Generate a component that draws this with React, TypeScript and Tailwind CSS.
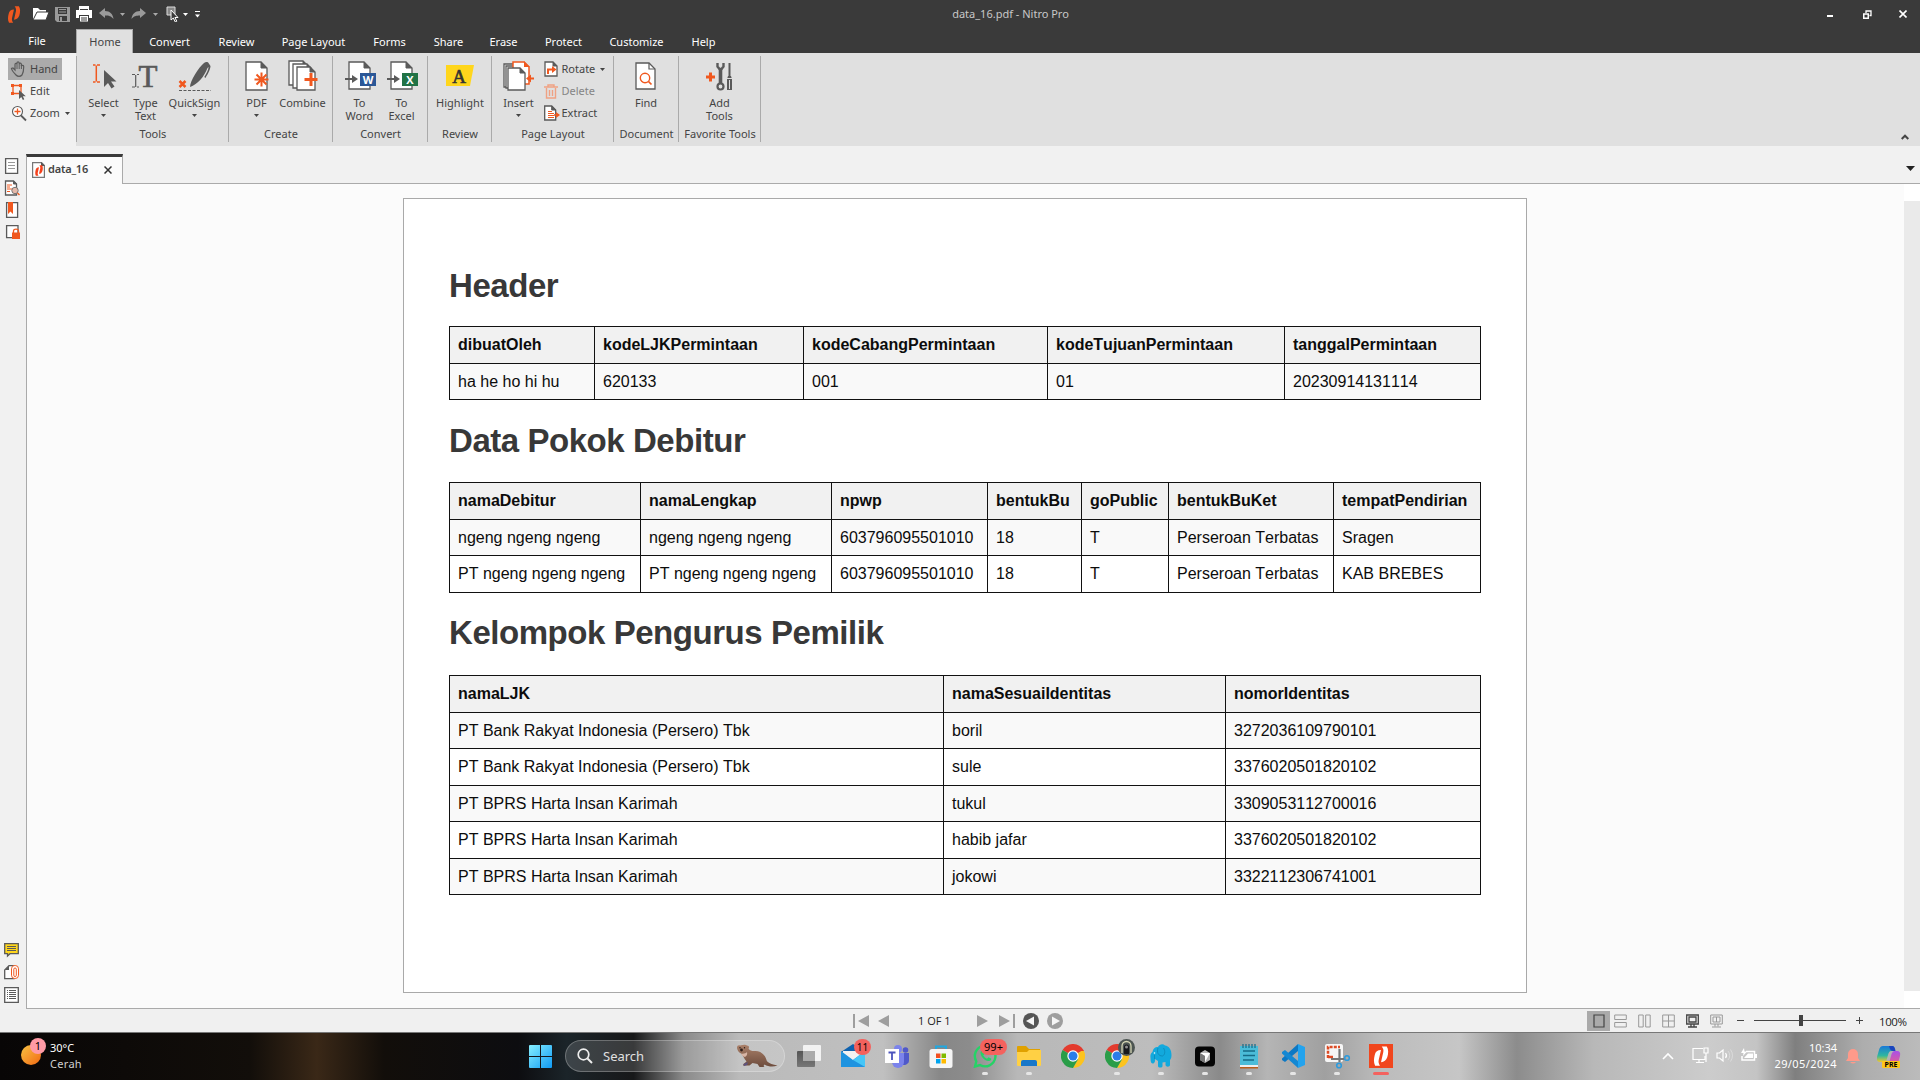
import React from "react";

const O = "#f0581f";
const G = "#5a5a5a";

function Svg({ w, h, className = "", children }: { w: number; h: number; className?: string; children: React.ReactNode }) {
  return (
    <svg width={w} height={h} viewBox={`0 0 ${w} ${h}`} fill="none" className={`block shrink-0 ${className}`}>
      {children}
    </svg>
  );
}

function Caret({ color = "#444" }: { color?: string }) {
  return (
    <Svg w={5} h={3}>
      <path d="M0 0h5L2.5 3z" fill={color} />
    </Svg>
  );
}

/* Two interlocking leaves of the Nitro mark */
function NitroMark({ w, h, color = O }: { w: number; h: number; color?: string }) {
  return (
    <svg width={w} height={h} viewBox="0 0 12 16" className="block shrink-0" fill={color}>
      <path d="M1 7.200C1.500 4.500 3.200 3.200 6 3.200L4.200 11c-.4 1.700-.1 3.200 1 4.700H1.300C-.1 13 .3 10 1 7.200z" />
      <path d="M6.600.3h4C12.100 2.500 12 6 11 9c-.9 2.600-2.500 3.700-5 3.900L7.800 5c.4-1.700 0-3.200-1.200-4.700z" />
    </svg>
  );
}

function TitleBar() {
  return (
    <div className="flex h-7 shrink-0 items-start text-[11px] text-[#c8c8c8]">
      <div className="flex h-7 w-[720px] items-center pl-[7px]">
        <NitroMark w={14} h={17} />
        <Svg w={18} h={16} className="ml-[11px]">
          <path d="M1 14V2h5l2 2h6v3" fill="#fff" />
          <path d="M1 14L5 6h12l-3 8z" fill="#fff" stroke="#3a3a3a" />
        </Svg>
        <Svg w={15} h={15} className="ml-[5px]">
          <path d="M0 0h15v15H2l-2-2z" fill="#9a9a9a" />
          <path d="M3 1h9v6H3zM4 9h8v5H4z" fill="#3a3a3a" />
          <path d="M4 2h7v1H4zM4 4.500h7v1H4zM5 10h2v4H5z" fill="#9a9a9a" />
        </Svg>
        <Svg w={16} h={16} className="ml-[6px]">
          <path d="M3 0h10v4H3zM0 4h16v8h-3V9H3v3H0z" fill="#fff" />
          <path d="M4 10h8v5.500H4z" fill="#fff" />
          <path d="M5 12h6M5 14h6M4 3.500h8" stroke="#3a3a3a" />
        </Svg>
        <Svg w={15} h={12} className="ml-[7px]">
          <path d="M6 0v3c5 0 8 3 8.500 8C12 8 10 7.500 6 7.500V10L0 5z" fill="#9a9a9a" />
        </Svg>
        <div className="ml-[6px]"><Caret color="#aaa" /></div>
        <Svg w={15} h={12} className="ml-[6px]">
          <path d="M9 0v3C4 3 1 6 .5 11 3 8 5 7.500 9 7.500V10l6-5z" fill="#9a9a9a" />
        </Svg>
        <div className="ml-[7px]"><Caret color="#aaa" /></div>
        <Svg w={14} h={16} className="ml-[8px]">
          <path d="M1 1h8v8H1z" fill="#888" stroke="#ddd" />
          <path d="M5 4v10l2.300-2 2 4 1.500-.8-1.900-3.700H12z" fill="#3a3a3a" stroke="#fff" />
        </Svg>
        <div className="ml-[3px]"><Caret color="#fff" /></div>
        <Svg w={5} h={7} className="ml-[7px]">
          <path d="M0 0h5v1H0zM0 3.500h5L2.500 6.500z" fill="#fff" />
        </Svg>
      </div>
      <div className="w-[581px] pt-[6px] text-center leading-[16px]">data_16.pdf - Nitro Pro</div>
      <div className="flex h-7 grow items-center justify-end pr-[13px]">
        <Svg w={6} h={2} className="mt-[4px]"><path d="M0 0h6v2H0z" fill="#fff" /></Svg>
        <Svg w={9} h={9} className="ml-[30px]">
          <path d="M.75 4h4.500v4.250H.75z" stroke="#fff" strokeWidth="1.500" />
          <path d="M3 3V1h5v4.500H6.500" stroke="#fff" strokeWidth="1.300" />
        </Svg>
        <Svg w={8} h={8} className="ml-[27px]"><path d="M.5.5l7 7M7.500.5l-7 7" stroke="#fff" strokeWidth="1.600" /></Svg>
      </div>
    </div>
  );
}

function Tab({ className, children }: { className: string; children: React.ReactNode }) {
  return <div className={`h-6 pl-[1px] pt-[5px] text-center leading-[16px] ${className}`}>{children}</div>;
}

function MenuTabs() {
  return (
    <div className="flex h-[25px] shrink-0 items-end text-[11px] text-white">
      <div className="h-6 w-[76px] pr-[2px] pt-[4px] text-center leading-[16px]">File</div>
      <div className="h-6 w-[57px] border border-b-0 border-[#aaa] bg-[#e0e0e0] pl-[1px] pt-[4px] text-center leading-[16px] text-[#444]">Home</div>
      <Tab className="w-[72px]">Convert</Tab>
      <Tab className="w-[62px]">Review</Tab>
      <Tab className="w-[92px]">Page Layout</Tab>
      <Tab className="w-[60px]">Forms</Tab>
      <Tab className="w-[58px]">Share</Tab>
      <Tab className="w-[52px]">Erase</Tab>
      <Tab className="w-[68px]">Protect</Tab>
      <Tab className="w-[78px]">Customize</Tab>
      <Tab className="w-[56px]">Help</Tab>
    </div>
  );
}

function Big({ icon, a, b, caret, className }: { icon: React.ReactNode; a: string; b?: string; caret?: boolean; className: string }) {
  return (
    <div className={`flex shrink-0 flex-col items-center leading-[13px] ${className}`}>
      <div className="flex h-[43px] items-start pt-[7px]">{icon}</div>
      <span className="whitespace-nowrap">{a}</span>
      {b && <span className="whitespace-nowrap">{b}</span>}
      {caret && <div className="mt-[5px]"><Caret /></div>}
    </div>
  );
}

function Group({ label, className, children }: { label: string; className: string; children: React.ReactNode }) {
  return (
    <div className={`mt-[3px] flex h-[86px] shrink-0 flex-col border-r border-[#aaa] ${className}`}>
      <div className="-mt-[3px] flex h-[73px] justify-center">{children}</div>
      <div className="whitespace-nowrap pl-[1px] text-center leading-[16px]">{label}</div>
    </div>
  );
}

function Small({ icon, label, caret, dim }: { icon: React.ReactNode; label: string; caret?: boolean; dim?: boolean }) {
  return (
    <div className={`flex h-[22px] items-center leading-[16px] ${dim ? "text-[#858585]" : ""}`}>
      <div className="w-[18px]">{icon}</div>
      <span>{label}</span>
      {caret && <div className="ml-[5px]"><Caret /></div>}
    </div>
  );
}

function PageShape({ x = 1, y = 1, w = 21, h = 28, c = 6 }: { x?: number; y?: number; w?: number; h?: number; c?: number }) {
  return (
    <>
      <path d={`M${x} ${y}h${w - c}l${c} ${c}v${h - c}h-${w}z`} fill="#fff" stroke={G} strokeWidth="1.300" />
      <path d={`M${x + w - c} ${y}l${c} ${c}h-${c}z`} fill={G} stroke={G} />
    </>
  );
}

function ConvertIcon({ color, letter }: { color: string; letter: string }) {
  return (
    <Svg w={31} h={32} className="ml-[1px]">
      <PageShape x={4} y={2} w={21} h={27} />
      <path d="M0 19h8" stroke={G} strokeWidth="2" />
      <path d="M7 15l6 4-6 4z" fill={G} />
      <path d="M15 13h16v13H15z" fill={color} />
      <text x="23" y="23.500" textAnchor="middle" fontSize="11" fontWeight="700" fill="#fff" fontFamily="Open Sans">{letter}</text>
    </Svg>
  );
}

function Ribbon() {
  return (
    <div className="flex h-[93px] shrink-0 bg-[#e0e0e0] text-[11px] text-[#444]">
      <div className="flex h-[93px] w-[76px] shrink-0 flex-col bg-[#f1f1f1] pl-2 pt-[5px] leading-[16px]">
        <div className="flex h-[22px] w-[54px] items-center bg-[#ababab]">
          <Svg w={22} h={18}>
            <path d="M8 15c-2-2-4-4-4.500-6.500L5 8l2 2V4.500C7 3 8.800 3 9 4.500V3c0-1.500 2-1.500 2.200 0v1c.3-1.300 2-1.200 2.200.3V6c.5-1.200 2.300-.8 2.300.5 0 3.500.1 5.500-1.700 8.500a4 4 0 01-6 0z" stroke={G} strokeWidth="1.200" />
            <path d="M9 4.500V9M11.200 4v5M13.400 5v4" stroke={G} />
          </Svg>
          <span>Hand</span>
        </div>
        <div className="flex h-[22px] items-center">
          <Svg w={22} h={18}>
            <path d="M5 3.500h8v8H5z" stroke={O} strokeWidth="1.300" />
            <path d="M3 2h3v3H3zM11 2h3v3h-3zM3 10h3v3H3z" fill={O} />
            <path d="M11 8v9l2.300-2 1.600 3 1.400-.8-1.500-2.900h3z" fill={G} />
          </Svg>
          <span>Edit</span>
        </div>
        <div className="flex h-[22px] items-center">
          <Svg w={22} h={18}>
            <circle cx="9.500" cy="7.500" r="5" fill="#fff" stroke={G} strokeWidth="1.100" />
            <path d="M13 11.500l5 5" stroke={G} strokeWidth="1.800" />
            <path d="M6.500 7.500h6M9.500 4.500v6" stroke={O} strokeWidth="1.300" />
          </Svg>
          <span>Zoom</span>
          <div className="ml-[5px]"><Caret /></div>
        </div>
      </div>
      <div className="mt-[3px] h-[86px] w-[1px] shrink-0 bg-[#aaa]" />
      <Group label="Tools" className="w-[152px]">
        <Big className="w-[46px]" a="Select" caret icon={
          <Svg w={26} h={30} className="ml-[2px] mt-[2px]">
            <path d="M1 3h2.500M5 3h3M4.300 3.500v16M1 20h2.500M5 20h3" stroke={O} strokeWidth="1.500" />
            <path d="M12 8v17l4-4 3.500 5.500 3-2-3.500-5h5.500z" fill={G} />
          </Svg>} />
        <Big className="w-[38px]" a="Type" b="Text" icon={
          <Svg w={28} h={30}>
            <text x="6.500" y="26.500" fontSize="31" fontWeight="400" stroke={G} strokeWidth=".7" fontFamily="Liberation Serif" fill={G}>T</text>
            <path d="M0 14.500h3M5 14.500h2M3.700 15v12M0 27h3M5 27h2" stroke={G} strokeWidth="1.200" />
          </Svg>} />
        <Big className="w-[60px]" a="QuickSign" caret icon={
          <Svg w={36} h={33}>
            <path d="M13 27c0-6 9-20 14-24 2-1.500 4-1 4.500 0l2 3c0 4-4 10-5 12l-1.200-1c2-3 4-7 4.300-10L30.500 8C27 17 21 24 13 27z" fill={G} />
            <path d="M2.500 21l6 6M8.500 21l-6 6" stroke={O} strokeWidth="2.500" />
            <path d="M2 30.500h32" stroke={G} strokeDasharray="3 1.500" />
          </Svg>} />
      </Group>
      <Group label="Create" className="w-[104px]">
        <Big className="w-[46px]" a="PDF" caret icon={
          <Svg w={26} h={32} className="ml-[2px]">
            <PageShape x={1} y={2} w={21} h={28} />
            <path d="M16.500 12.500v14M9.500 19.500h14M11.500 14.500l10 10M21.500 14.500l-10 10" stroke={O} strokeWidth="2" />
          </Svg>} />
        <Big className="w-[48px] pr-[2px]" a="Combine" icon={
          <Svg w={30} h={33}>
            <PageShape x={1} y={1} w={18} h={24} c={4} />
            <PageShape x={5} y={4} w={18} h={24} c={4} />
            <PageShape x={9} y={7} w={18} h={23} c={5} />
            <path d="M23 13v13M16.500 19.500h13" stroke={O} strokeWidth="3" />
          </Svg>} />
      </Group>
      <Group label="Convert" className="w-[95px]">
        <Big className="w-[42px] pl-[1px]" a="To" b="Word" icon={<ConvertIcon color="#2b5797" letter="W" />} />
        <Big className="w-[42px] pl-[1px]" a="To" b="Excel" icon={<ConvertIcon color="#217346" letter="X" />} />
      </Group>
      <Group label="Review" className="w-[64px]">
        <Big className="w-[60px] pl-[1px]" a="Highlight" icon={
          <Svg w={28} h={30}>
            <path d="M0 5h28l-4 21H0z" fill="#ffd61c" />
            <text x="13" y="22.500" textAnchor="middle" fontSize="19" fontWeight="400" stroke="#333" strokeWidth=".6" fill="#333" fontFamily="Liberation Serif">A</text>
          </Svg>} />
      </Group>
      <Group label="Page Layout" className="w-[122px]">
        <Big className="w-[50px]" a="Insert" caret icon={
          <Svg w={32} h={31}>
            <path d="M6 27H1V4h9" fill="#fff" stroke={G} strokeWidth="1.300" />
            <path d="M8 28H3V6h8" fill="#fff" stroke={G} strokeWidth="1.300" />
            <path d="M10 8V2h11l5 5v17h-9z" fill="#fff" stroke={O} strokeWidth="1.500" />
            <path d="M21 1l6 6h-6z" fill={O} />
            <PageShape x={5} y={8} w={17} h={22} c={5} />
            <path d="M31 18.500h-5" stroke={O} strokeWidth="2" />
            <path d="M28 14.500v8l-5-4z" fill={O} />
          </Svg>} />
        <div className="w-[68px] pt-[5px]">
          <Small label="Rotate" caret icon={
            <Svg w={15} h={17}>
              <PageShape x={1} y={1} w={12} h={14} c={4} />
              <path d="M4 13V8.500h5" stroke={O} strokeWidth="2" /><path d="M8 5l4.500 3.500L8 12z" fill={O} />
            </Svg>} />
          <Small label="Delete" dim icon={
            <Svg w={15} h={15}>
              <g stroke="#efa183" strokeWidth="1.400"><path d="M0 3h14M4 3V1h6v2M2.500 4v10h9V4M5.500 6v6M8.500 6v6" /></g>
            </Svg>} />
          <Small label="Extract" icon={
            <Svg w={16} h={16}>
              <PageShape x={0.700} y={1} w={11} h={14} c={4} />
              <path d="M4 6.500h4M4 8.500h6M4 10.500h6M4 12.500h6" stroke={O} />
              <path d="M10 10h3" stroke={O} strokeWidth="1.500" /><path d="M12 7l4 3-4 3z" fill={O} />
            </Svg>} />
        </div>
      </Group>
      <Group label="Document" className="w-[65px]">
        <Big className="w-[50px]" a="Find" icon={
          <Svg w={22} h={31}>
            <path d="M1 3h13l6 6v20H1z" fill="#fff" stroke={G} strokeWidth="1.300" />
            <path d="M14 3v6h6" stroke={G} strokeWidth="1.200" />
            <circle cx="10" cy="18" r="4.700" stroke={O} strokeWidth="1.400" /><path d="M13.500 21.500l3 3" stroke={O} strokeWidth="1.700" />
          </Svg>} />
      </Group>
      <Group label="Favorite Tools" className="w-[82px]">
        <Big className="w-[60px]" a="Add" b="Tools" icon={
          <Svg w={28} h={31}>
            <path d="M0 17h9M4.500 12.500v9" stroke={O} strokeWidth="3" />
            <path d="M11.500 3v3.500l2 2.500h2l2-2.500V3" stroke={G} strokeWidth="2.400" />
            <path d="M14.500 9v15" stroke={G} strokeWidth="3.600" />
            <circle cx="14.500" cy="26.500" r="3" stroke={G} strokeWidth="2.200" />
            <path d="M23.500 3v14" stroke={G} strokeWidth="2" /><path d="M22 16h3l1 3v11h-5V19z" fill={G} />
            <path d="M20.500 18.500h6M23.500 20v9" stroke="#ddd" />
          </Svg>} />
      </Group>
      <div className="flex grow items-end justify-end pb-[6px] pr-[11px]">
        <Svg w={8} h={6}><path d="M.7 5L4 1.700 7.300 5" stroke="#444" strokeWidth="2" /></Svg>
      </div>
    </div>
  );
}

function SideIcon({ kind }: { kind: string }) {
  return (
    <Svg w={16} h={16}>
      {kind === "page" && <><path d="M1.600.7h12v14.600h-12z" fill="#fff" stroke={G} strokeWidth="1.300" /><path d="M4 4.500h7M4 7.500h7M4 10.500h7" stroke="#999" /></>}
      {kind === "find" && <><PageShape x={1.500} y={1} w={11} h={14} c={3} /><path d="M3 5h5M3 7h3M3 9h5M3 11.500h3" stroke={O} /><circle cx="11" cy="10.500" r="3.200" fill="#e5b9a9" stroke="#777" /><path d="M13.500 13l2 2" stroke={O} strokeWidth="1.500" /></>}
      {kind === "mark" && <><path d="M2.600.7h11v14.600h-11z" fill="#fff" stroke={G} strokeWidth="1.300" /><path d="M4 0h5v12l-2.500-2.500L4 12z" fill={O} /></>}
      {kind === "lock" && <><path d="M2.600.7H14v12H2.600z" fill="#fff" stroke={G} strokeWidth="1.300" /><path d="M8 7.500h8V14H8z" fill={O} /><path d="M9.500 8V6c0-2.500 5-2.500 5 0v2" stroke={O} strokeWidth="1.300" /></>}
      {kind === "note" && <><path d="M.7.7h13.600v10H6L3.500 13v-2.300H.7z" fill="#ffd61c" stroke={G} strokeWidth="1.300" /><path d="M3 3.500h9M3 5.500h9M3 7.500h9" stroke={G} /></>}
      {kind === "clip" && <><path d="M5 .7h5v13H.7V5z" fill="#fff" stroke={G} strokeWidth="1.300" /><path d="M1 5h4V1z" fill={G} /><rect x="7.500" y=".5" width="7" height="13" rx="3.300" fill="#fff" stroke={O} /><rect x="9.800" y="3" width="2.500" height="8.500" rx="1.200" stroke={O} /></>}
      {kind === "list" && <><path d="M.7.7h13.600v14.600H.7z" fill="#fff" stroke={G} strokeWidth="1.300" /><path d="M3 3.500h1M5 3.500h7M3 5.500h1M5 5.500h7M3 7.500h1M5 7.500h7M3 9.500h1M5 9.500h7M3 11.500h1M5 11.500h7" stroke={G} /></>}
    </Svg>
  );
}

function Table({ cols, head, rows, className = "" }: { cols: string; head: string[]; rows: string[][]; className?: string }) {
  return (
    <div className={`border-l border-t border-[#111] ${className}`}>
      {[head, ...rows].map((r, i) => (
        <div
          key={i}
          className={`grid ${cols} ${i % 2 ? "h-[36px]" : "h-[37px]"} ${i === 0 ? "bg-[#f1f1f1] font-bold" : i % 2 ? "bg-[#f9f9f9]" : "bg-white"}`}
        >
          {r.map((c, j) => (
            <div key={j} className="truncate border-b border-r border-[#111] pl-[8px] pt-[6px] leading-[24px] text-[#0c0c0c]">
              {c}
            </div>
          ))}
        </div>
      ))}
    </div>
  );
}

function Heading({ children }: { children: React.ReactNode }) {
  return <h1 className="text-[33px] font-bold leading-[40px] tracking-[-0.45px] text-[#383838]">{children}</h1>;
}

function Page() {
  return (
    <div className="ml-[376px] mt-[14px] h-[795px] w-[1124px] border border-[#a9a9a9] bg-white pl-[45px] pt-[67px] font-['Liberation_Sans',Arial,sans-serif] text-[16px] [font-kerning:none]">
      <div className="w-[1032px]">
        <Heading>Header</Heading>
        <Table
          className="mt-[20px]"
          cols="grid-cols-[145px_209px_244px_237px_196px]"
          head={["dibuatOleh", "kodeLJKPermintaan", "kodeCabangPermintaan", "kodeTujuanPermintaan", "tanggalPermintaan"]}
          rows={[["ha he ho hi hu", "620133", "001", "01", "20230914131114"]]}
        />
        <div className="mt-[21px]"><Heading>Data Pokok Debitur</Heading></div>
        <Table
          className="mt-[21px]"
          cols="grid-cols-[191px_191px_156px_94px_87px_165px_147px]"
          head={["namaDebitur", "namaLengkap", "npwp", "bentukBu", "goPublic", "bentukBuKet", "tempatPendirian"]}
          rows={[
            ["ngeng ngeng ngeng", "ngeng ngeng ngeng", "603796095501010", "18", "T", "Perseroan Terbatas", "Sragen"],
            ["PT ngeng ngeng ngeng", "PT ngeng ngeng ngeng", "603796095501010", "18", "T", "Perseroan Terbatas", "KAB BREBES"],
          ]}
        />
        <div className="mt-[20px]"><Heading>Kelompok Pengurus Pemilik</Heading></div>
        <Table
          className="mt-[22px]"
          cols="grid-cols-[494px_282px_255px]"
          head={["namaLJK", "namaSesuaiIdentitas", "nomorIdentitas"]}
          rows={[
            ["PT Bank Rakyat Indonesia (Persero) Tbk", "boril", "3272036109790101"],
            ["PT Bank Rakyat Indonesia (Persero) Tbk", "sule", "3376020501820102"],
            ["PT BPRS Harta Insan Karimah", "tukul", "3309053112700016"],
            ["PT BPRS Harta Insan Karimah", "habib jafar", "3376020501820102"],
            ["PT BPRS Harta Insan Karimah", "jokowi", "3322112306741001"],
          ]}
        />
      </div>
    </div>
  );
}

function Workspace() {
  return (
    <div className="flex h-[863px] shrink-0 bg-[#f1f1f1]">
      <div className="flex w-[26px] shrink-0 flex-col items-start gap-[6px] pl-[4px] pt-[12px]">
        <SideIcon kind="page" />
        <SideIcon kind="find" />
        <SideIcon kind="mark" />
        <div className="pt-[1px]"><SideIcon kind="lock" /></div>
        <div className="mb-[6px] mt-auto flex flex-col gap-[6px]">
          <SideIcon kind="note" />
          <SideIcon kind="clip" />
          <SideIcon kind="list" />
        </div>
      </div>
      <div className="flex grow flex-col">
        <div className="flex h-[38px] shrink-0 items-stretch pt-[8px]">
          <div className="flex w-[97px] shrink-0 items-center border-x border-t-[3px] border-x-[#aaa] border-t-[#3a3a3a] bg-[#fbfbfb] pb-[2px] pl-[5px] text-[11px] font-semibold text-[#444]">
            <div className="grid place-items-center">
              <Svg w={13} h={16} className="col-start-1 row-start-1">
                <path d="M.6.6h9l2.800 3v11.800H.6z" fill="#fff" stroke="#777" strokeWidth="1.200" />
                <path d="M9 0l4 4H9z" fill="#555" />
              </Svg>
              <div className="z-10 col-start-1 row-start-1 mt-[2px]"><NitroMark w={8} h={11} color="#f4421d" /></div>
            </div>
            <span className="ml-[3px] tracking-[-0.2px]">data_16</span>
            <Svg w={8} h={8} className="ml-[16px]"><path d="M.5.500l7 7M7.500.500l-7 7" stroke="#333" strokeWidth="1.500" /></Svg>
          </div>
          <div className="flex grow items-start justify-end border-b border-[#aaa] pr-[5px] pt-[12px]">
            <Svg w={9} h={5}><path d="M0 0h9L4.500 5z" fill="#222" /></Svg>
          </div>
        </div>
        <div className="flex grow border-b border-l border-[#aaa] bg-[#fbfbfb]">
          <div className="grow"><Page /></div>
          <div className="h-full w-4 bg-white pb-[17px] pt-[17px]"><div className="h-full bg-[#eaeaea]" /></div>
        </div>
      </div>
    </div>
  );
}

function StatusBar() {
  return (
    <div className="flex h-[23px] shrink-0 items-center bg-[#f0f0f0] text-[12px] text-[#222]">
      <div className="flex grow items-center pl-[853px]">
        <Svg w={16} h={14}><path d="M0 0h2v14H0zM16 1v12L5 7z" fill="#9e9e9e" /></Svg>
        <Svg w={11} h={12} className="ml-[9px]"><path d="M11 0v12L0 6z" fill="#9e9e9e" /></Svg>
        <span className="ml-[29px] w-[35px] whitespace-nowrap font-['Open_Sans',sans-serif] text-[11px] leading-[16px]">1 OF 1</span>
        <Svg w={11} h={12} className="ml-[24px]"><path d="M0 0v12l11-6z" fill="#9e9e9e" /></Svg>
        <Svg w={16} h={14} className="ml-[11px]"><path d="M14 0h2v14h-2zM0 1v12l11-6z" fill="#9e9e9e" /></Svg>
        <Svg w={16} h={16} className="ml-[8px]"><circle cx="8" cy="8" r="8" fill="#555" /><path d="M11 3.500v9L3 8z" fill="#f5f5f5" /></Svg>
        <Svg w={16} h={16} className="ml-[8px]"><circle cx="8" cy="8" r="8" fill="#9e9e9e" /><path d="M5 3.500v9L13 8z" fill="#f5f5f5" /></Svg>
      </div>
      <div className="flex items-center">
        <div className="flex h-5 w-[23px] items-center justify-center bg-[#aaa]"><Svg w={12} h={14}><path d="M1 1h10v12H1z" stroke="#444" strokeWidth="1.200" /></Svg></div>
        <Svg w={13} h={14} className="ml-[4px]"><path d="M.7 1h11.600v4.500H.7zM.7 8.500h11.600V13H.7z" stroke="#999" /></Svg>
        <Svg w={13} h={14} className="ml-[11px]"><path d="M.7 1h4.500v12H.7zM7.700 1h4.500v12H7.700z" stroke="#999" /></Svg>
        <Svg w={13} h={14} className="ml-[11px]"><path d="M.7 1h11.600v12H.7zM6.500 1v12M.7 7h11.600" stroke="#999" /></Svg>
        <Svg w={13} h={14} className="ml-[11px]"><path d="M.7 1h11.600v9H.7zM3 3h7v5H3zM5 10v2.500M8 10v2.500M2 13h9" stroke="#444" strokeWidth="1.300" /></Svg>
        <Svg w={13} h={14} className="ml-[11px]"><path d="M.7 1h11.600v9H.7zM3 3h7v5H3zM6.500 3v5M5 10v2.500M8 10v2.500M2 13h9" stroke="#999" /></Svg>
        <div className="ml-[14px] h-[1px] w-[7px] bg-[#444]" />
        <div className="ml-[10px] flex h-3 w-[92px] items-center">
          <div className="h-[1px] w-[45px] bg-[#444]" />
          <div className="h-[11px] w-[4px] bg-[#444]" />
          <div className="h-[1px] grow bg-[#444]" />
        </div>
        <Svg w={7} h={7} className="ml-[10px]"><path d="M0 3.500h7M3.500 0v7" stroke="#444" /></Svg>
        <span className="ml-[16px] w-[41px] pt-[2px] font-['Open_Sans',sans-serif] text-[11.500px] leading-[16px] tracking-[-0.4px]">100%</span>
      </div>
    </div>
  );
}

function AppSlot({ children, dot, active }: { children: React.ReactNode; dot?: boolean; active?: boolean }) {
  return (
    <div className="flex w-11 shrink-0 flex-col items-center pt-[11px]">
      <div className="relative h-[28px]">{children}</div>
      {dot && <div className="h-[3px] w-[6px] rounded-full bg-[#e6e6e6]" />}
      {active && <div className="h-[3px] w-4 rounded-full bg-[#f4625e]" />}
    </div>
  );
}

function Chrome() {
  return (
    <Svg w={24} h={24}>
      <path d="M12 12L1.600 6a12 12 0 0120.800 0z" fill="#e33b2e" />
      <path d="M12 12L22.400 6A12 12 0 0112 24l5-9z" fill="#fcc31e" />
      <path d="M12 12l5.200 3L12 24A12 12 0 011.600 6z" fill="#2a9d48" />
      <path d="M12 6.500h10.700" stroke="#e33b2e" />
      <circle cx="12" cy="12" r="5.700" fill="#fff" /><circle cx="12" cy="12" r="4.500" fill="#2b7de9" />
    </Svg>
  );
}

function Badge({ className, children }: { className: string; children: React.ReactNode }) {
  return <div className={`absolute flex items-center justify-center rounded-full font-['Noto_Sans',sans-serif] text-black ${className}`}>{children}</div>;
}

const wallpaper =
  "bg-[linear-gradient(90deg,#080606_0%,#120e0a_13%,#3a2817_16.5%,#120e0a_20%,#0d0d10_27%,#1b2429_29.5%,#171819_33%,#8a8a8a_35.6%,#bababa_38.5%,#c0c0c0_46%,#878787_49%,#8c8c8c_50.5%,#b8b8b8_53%,#bdbdbd_60%,#8a8a8a_63.5%,#b5b5b5_66%,#a0a0a0_69%,#bcbcbc_72%,#c6c6c6_76%,#8c8c8c_79%,#b8b8b8_83%,#cccccc_89%,#c4c4c4_91.500%,#7f7f7f_93.5%,#adadad_97%,#bbbbbb_100%)]";

function Taskbar() {
  return (
    <div className={`flex h-[48px] shrink-0 border-t border-[#777] font-['Noto_Sans',sans-serif] ${wallpaper}`}>
      <div className="flex w-[526px] shrink-0 items-start pl-[21px] pt-[8px] text-[11px] leading-[16px] text-white">
        <div className="relative mt-[4px] h-[22px] w-[29px]">
          <div className="h-5 w-5 rounded-full bg-linear-to-br from-[#f5c242] to-[#f0660f]" />
          <Badge className="-top-[7px] left-[9px] h-4 w-4 bg-[#ff9aa5] text-[11px]">1</Badge>
        </div>
        <div className="-mt-[1px]"><div>30°C</div><div className="tracking-[0.3px] text-[#d0d0d0]">Cerah</div></div>
      </div>
      <div className="flex w-[39px] shrink-0 pl-[3px] pt-[12px]">
        <Svg w={23} h={23}>
          <defs><linearGradient id="win" x1="0" y1="0" x2="1" y2="1"><stop stopColor="#86efff" /><stop offset="1" stopColor="#109bf5" /></linearGradient></defs>
          <path d="M0 1q0-1 1-1h10v11H0zM12 0h10q1 0 1 1v10H12zM0 12h11v11H1q-1 0-1-1zM12 12h11v10q0 1-1 1H12z" fill="url(#win)" />
        </Svg>
      </div>
      <div className="mt-[7px] flex h-8 w-[220px] shrink-0 items-center rounded-full border border-white/25 bg-white/15 pl-[11px] text-[13px] text-[#e0e0e0]">
        <Svg w={16} h={16}><circle cx="6.500" cy="6.500" r="5.300" stroke="#eee" strokeWidth="1.700" /><path d="M10.500 10.500l4.500 4.500" stroke="#eee" strokeWidth="1.900" /></Svg>
        <span className="ml-[10px] pt-[1px]">Search</span>
        <Svg w={42} h={24} className="ml-auto mr-[6px]">
          <defs><linearGradient id="fur" x1="0" y1="0" x2="0" y2="1"><stop stopColor="#aa8069" /><stop offset="1" stopColor="#6d4c3d" /></linearGradient></defs>
          <path d="M1 4C1 1 3 1 4 1.500 7 .5 10 .5 11 1.500c2 0 2.500 2 1.500 3 1 2 3 2.500 6 2.500 6-.5 11 4 12 9 .5 2.500 5 4.500 11 5.500-4 1.700-9 1.500-13-1l-1 1.500 1 1h-5l-2-3-5-1-3 2.500H7L7.500 20l3-2.500C8 14.500 7 11 5 9.500 2.500 8.500 1.500 6.500 1 4z" fill="url(#fur)" />
          <path d="M5 9.500c2 .5 5 0 6-1.500.5 2 0 4-2 5-2-.3-3-1.500-4-3.500z" fill="#d8b5a5" /><circle cx="5.500" cy="6" r="1.400" fill="#2c1d19" /><circle cx="4" cy="3.800" r=".7" fill="#2c1d19" /><circle cx="8.500" cy="3.800" r=".7" fill="#2c1d19" />
          <path d="M7.500 20l4.500-2-1 3-3 1z" fill="#5d527e" />
        </Svg>
      </div>
      <div className="ml-[2px] flex shrink-0">
        <AppSlot><Svg w={24} h={24}><defs><linearGradient id="tv" x1="0" y1="0" x2="0" y2="1"><stop stopColor="#555" /><stop offset="1" stopColor="#777" /></linearGradient></defs><rect x="6" y="1" width="18" height="16" rx="1" fill="#f2f2f2" /><rect x="0" y="7" width="18" height="16" rx="1" fill="url(#tv)" /><path d="M6 7h12v10H6z" fill="#aaa" /></Svg></AppSlot>
        <AppSlot>
          <Svg w={24} h={24}><path d="M0 8l12-8 12 8z" fill="#0f62ae" /><path d="M2 7h20v10H2z" fill="#f2f2f2" /><path d="M0 7l12 9 12-9v16H0z" fill="#1e93e0" /><path d="M24 7v16L12 16z" fill="#45c6f7" /></Svg>
          <Badge className="-top-[5px] left-[13px] h-4 w-[17px] bg-[#f4625e] text-[10px]">11</Badge>
        </AppSlot>
        <AppSlot><Svg w={24} h={24}><circle cx="13" cy="5" r="4" fill="#7b83eb" /><circle cx="20.500" cy="6" r="2.800" fill="#5059c9" /><path d="M16 9h8v8a5 5 0 01-8 3z" fill="#5059c9" /><path d="M7 9h12v9a6 6 0 01-12 0z" fill="#7b83eb" /><path d="M0 5h14v14H0z" fill="#fff" /><path d="M3.500 8.500h7M7 8.500V16" stroke="#4b53bc" strokeWidth="1.800" /></Svg></AppSlot>
        <AppSlot><Svg w={24} h={25}><path d="M7 6V2.500h10V6" stroke="#21a7e0" strokeWidth="2" /><rect x=".5" y="5" width="23" height="19" rx="2.500" fill="#f5f5f5" /><path d="M7 9.500h4.500V14H7z" fill="#f25022" /><path d="M12.500 9.500H17V14h-4.500z" fill="#7fba00" /><path d="M7 15h4.500v4.500H7z" fill="#00a4ef" /><path d="M12.500 15H17v4.500h-4.500z" fill="#ffb900" /></Svg></AppSlot>
        <AppSlot dot>
          <Svg w={24} h={24}><path d="M2 22.500l1.300-5.200a10.300 10.300 0 113.800 3.700z" stroke="#25d366" strokeWidth="2.400" /><path d="M8 7c-2 3 2 9 7 10 2 .5 4-1.500 3-2.500l-2.500-1.300-1.500 1.500c-2-.8-3-2-3.700-3.500L11.500 10l-1.200-3z" fill="#25d366" /></Svg>
          <Badge className="-top-[5px] left-[7px] h-4 w-[27px] bg-[#f4625e] text-[11px]">99+</Badge>
        </AppSlot>
        <AppSlot dot><Svg w={24} h={24}><path d="M0 3q0-1 1-1h8l3 3h11v6H0z" fill="#e0a100" /><path d="M0 8h10l2-2h12v15q0 1-1 1H1q-1 0-1-1z" fill="#ffd044" /><path d="M4 22v-4q0-2 2-2h12q2 0 2 2v4z" fill="#1877c9" /></Svg></AppSlot>
        <AppSlot><Chrome /></AppSlot>
        <AppSlot dot>
          <Chrome />
          <Badge className="-top-[5px] left-[13px] h-[17px] w-[17px] bg-[#4d5552]">
            <Svg w={15} h={15}><path d="M3 13V6a4.500 4.500 0 019 0v7" stroke="#d5d6b4" strokeWidth="1.300" /><path d="M5 14V7a2.500 2.500 0 015 0v7z" fill="#17191c" /><circle cx="7.500" cy="7" r="1.500" fill="#8f8f8f" /></Svg>
          </Badge>
        </AppSlot>
        <AppSlot dot><Svg w={24} h={24}><path d="M1.500 14C1 11 2 9 3.500 8 4 4 7 2.500 9 3c1.500-3 5-3.500 7-1.500 4 .5 6.500 4 6.500 9.500 0 2-.5 4-1.500 5v5c0 2-4 2.500-4.500 0v-3l-3 .5V22c0 2-4.500 2-4.500 0v-5L6 15c.5 3-1 4.500-2.500 4.500S1.500 17 1.500 14z" fill="#12a9dd" /><path d="M9 4c-1.500 4 0 8 4.500 8 2.500-1 3-5 1-8M5.500 11v4" stroke="#0c86b5" strokeWidth=".8" /><circle cx="5.500" cy="9" r=".8" fill="#fff" /></Svg></AppSlot>
        <AppSlot dot><Svg w={20} h={24}><rect y="2.500" width="20" height="20" rx="4" fill="#050505" /><path d="M5 9l5-3 5 3v7l-5 3-5-3z" fill="#b9b9b9" /><path d="M5 9h10l-5 9v-6z" fill="#fff" /><path d="M5 9l5 3v7l-5-3z" fill="#777" /></Svg></AppSlot>
        <AppSlot dot><Svg w={20} h={25}><path d="M1 2h18v20H1z" fill="#4bbcd8" /><path d="M1 21h18v2H1z" fill="#eee" /><path d="M1 23h18v1.500H1z" fill="#b85e1b" /><path d="M4 0v4M7 0v4M10 0v4M13 0v4M16 0v4" stroke="#1d6f8c" strokeWidth="1.300" /><path d="M4 7h12M4 11.500h12M4 16h11" stroke="#166b87" strokeWidth="1.700" /></Svg></AppSlot>
        <AppSlot dot><Svg w={24} h={24}><path d="M17 0l7 3v18l-7 3z" fill="#23a3ee" /><path d="M17 0v7L4 18l-3-2v-1.500z" fill="#0c78c4" /><path d="M17 24v-7L4 6 1 8v1.500z" fill="#1488d3" /></Svg></AppSlot>
        <AppSlot dot><Svg w={26} h={25} className="ml-[2px]"><rect x="0" y="0" width="18" height="18" rx="2" fill="#f6f6f6" /><path d="M3 14V3h12" stroke="#dd4b25" strokeWidth="2.500" strokeDasharray="3 1.200" /><path d="M3 13h5" stroke="#dd4b25" strokeWidth="2.500" /><path d="M14.500 5v13M6 15h14" stroke="#777" strokeWidth="2.200" /><circle cx="14" cy="21.500" r="2.300" stroke="#2d9bdd" strokeWidth="1.600" /><circle cx="22" cy="14" r="2.300" stroke="#2d9bdd" strokeWidth="1.600" /></Svg></AppSlot>
        <AppSlot active><div className="flex h-6 w-6 items-center justify-center bg-[#f1461d]"><NitroMark w={16} h={20} color="#fff" /></div></AppSlot>
      </div>
      <div className="flex grow items-start justify-end text-right text-[11px] leading-[16px] text-white">
        <Svg w={12} h={8} className="mt-[19px]"><path d="M1 7l5-5 5 5" stroke="#fff" strokeWidth="1.600" /></Svg>
        <Svg w={17} h={17} className="ml-[18px] mt-[14px]"><path d="M11 1.500H1v11h12V9M4 15.500h8M7 12.500v3" stroke="#fff" strokeWidth="1.200" /><path d="M12 1h4v5h-4zM14 6v9" stroke="#fff" strokeWidth="1.200" /></Svg>
        <Svg w={17} h={15} className="ml-[7px] mt-[15px]"><path d="M1 5h2.500L7 2v11l-3.500-3H1z" stroke="#fff" strokeWidth="1.200" /><path d="M9.500 5q2 2.500 0 5" stroke="#fff" strokeWidth="1.200" /><path d="M12 3q3.500 4.500 0 9M14.500 1.500q4 6 0 12" stroke="#ffffff55" /></Svg>
        <Svg w={18} h={15} className="ml-[7px] mt-[15px]"><path d="M6 3.500h8.500v8.500H2V8" stroke="#fff" strokeWidth="1.500" /><path d="M8 5.500h5V10H4z" fill="#fff" /><path d="M15 6h2v4h-2z" fill="#fff" /><path d="M4 0L1 5h2.500L3 8l4-4.500H4.500z" fill="#fff" /></Svg>
        <div className="mt-[7px] w-[79px] whitespace-nowrap"><div>10:34</div><div className="tracking-[0.4px]">29/05/2024</div></div>
        <Svg w={14} h={15} className="ml-[9px] mt-[16px]"><path d="M0 12l2-3V5a5 5 0 0110 0v4l2 3zM4 13h6q-3 3-6 0z" fill="#fe9a8a" /></Svg>
        <div className="ml-[17px] mr-[19px] mt-[12px] grid w-[24px] justify-items-center">
          <Svg w={24} h={23} className="col-start-1 row-start-1">
            <defs>
              <linearGradient id="cpa" x1="0" y1="0" x2="0" y2="1"><stop stopColor="#1979d8" /><stop offset=".6" stopColor="#2fb7a0" /><stop offset="1" stopColor="#f3c72c" /></linearGradient>
              <linearGradient id="cpb" x1="0" y1="0" x2="0" y2="1"><stop stopColor="#a951e8" /><stop offset="1" stopColor="#f0617e" /></linearGradient>
            </defs>
            <path d="M6 1h9q3 0 3 5h-4q-2 0-3 4l-2 7H3q-4 0-3-5l2-7q1-4 4-4z" fill="url(#cpa)" />
            <path d="M18 6h2q4 0 3 5l-2 7q-1 4-4 4H9q2 0 3-4l2-7q1-5 4-5z" fill="url(#cpb)" />
            <path d="M12 1h4q2 1 2.500 5H16q-3 0-4-5z" fill="#1b45bd" />
          </Svg>
          <div className="z-10 col-start-1 row-start-1 ml-[4px] mt-[16px] h-[7px] w-[18px] rounded-[1px] bg-[#ffc61a] text-center text-[7px] font-bold leading-[7px] text-black">PRE</div>
        </div>
      </div>
    </div>
  );
}

export default function App() {
  return (
    <div className="flex h-[1080px] w-[1920px] flex-col overflow-hidden bg-[#3a3a3a] font-['Noto_Sans',sans-serif]">
      <TitleBar />
      <MenuTabs />
      <Ribbon />
      <Workspace />
      <StatusBar />
      <Taskbar />
    </div>
  );
}
